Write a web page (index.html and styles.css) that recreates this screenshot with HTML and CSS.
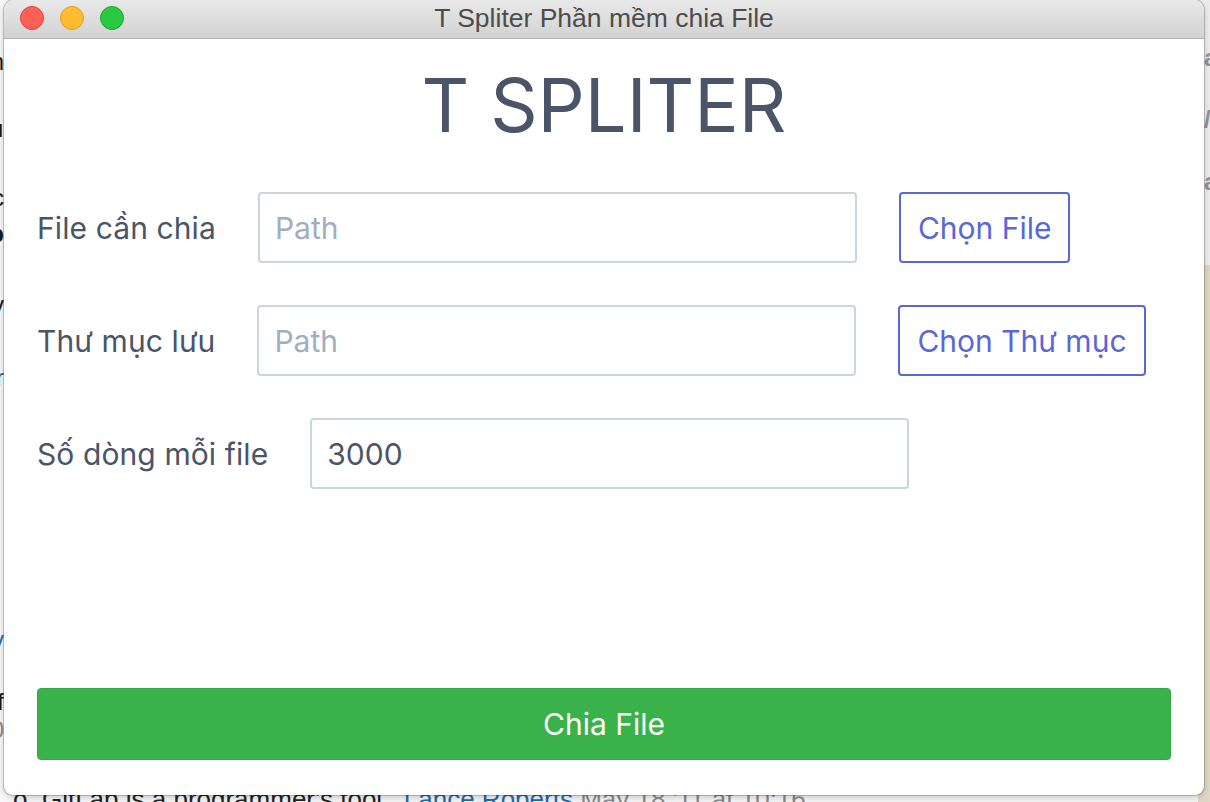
FILE: index.html
```html
<!DOCTYPE html>
<html lang="vi">
<head>
<meta charset="utf-8">
<title>T Spliter</title>
<link rel="stylesheet" href="styles.css">
</head>
<body>
<div class="desktop">
  <div class="backdrop">
    <div class="bg-left">
      <span class="frag f1">n</span>
      <span class="frag f2">ı</span>
      <span class="frag f3">c</span>
      <span class="frag f4">p</span>
      <span class="frag f5">v</span>
      <span class="frag f6">r</span>
      <span class="frag f7 link">y</span>
      <span class="frag f8">f</span>
      <span class="frag f9 grey">0</span>
    </div>
    <div class="bg-right">
      <div class="bg-right-top">
        <span class="rfrag">a</span>
        <span class="rfrag">/</span>
        <span class="rfrag">a</span>
      </div>
      <div class="bg-right-bottom"></div>
    </div>
    <div class="bg-bottom">o, GitLab is a programmer's tool. &nbsp;<span class="link">Lance Roberts</span> <span class="grey">May 18 '11 at 10:16</span></div>
  </div>

  <div class="window">
    <div class="titlebar">
      <div class="lights">
        <span class="light red"></span>
        <span class="light yellow"></span>
        <span class="light green"></span>
      </div>
      <div class="title">T Spliter Phần mềm chia File</div>
    </div>
    <div class="content">
      <h1 class="heading">T SPLITER</h1>
      <div class="form">
        <div class="row">
          <label class="label">File cần chia</label>
          <input class="input" type="text" placeholder="Path">
          <button class="btn-outline">Chọn File</button>
        </div>
        <div class="row">
          <label class="label">Thư mục lưu</label>
          <input class="input" type="text" placeholder="Path">
          <button class="btn-outline">Chọn Thư mục</button>
        </div>
        <div class="row">
          <label class="label">Số dòng mỗi file</label>
          <input class="input" type="text" value="3000">
        </div>
      </div>
      <button class="btn-primary">Chia File</button>
    </div>
  </div>
</div>
</body>
</html>
```

FILE: styles.css
```css
* { box-sizing: border-box; }
html, body { margin: 0; padding: 0; }
body {
  width: 1210px;
  height: 802px;
  overflow: hidden;
  font-family: Inter, "Noto Sans", sans-serif;
}
.desktop {
  position: relative;
  width: 1210px;
  height: 802px;
  background: #f4f4f4;
  overflow: hidden;
}
.backdrop {
  position: absolute;
  inset: 0;
  font-family: "Liberation Sans", Arial, sans-serif;
}
.bg-left {
  position: absolute;
  left: 0; top: 0;
  width: 12px; height: 802px;
  background: #f7f7f7;
}
.frag {
  position: absolute;
  right: 8px;
  font-size: 24px;
  color: #1a1a1a;
  line-height: 1;
}
.f1 { top: 50px; }
.f2 { top: 117px; }
.f3 { top: 186px; }
.f4 { top: 222px; font-weight: bold; }
.f5 { top: 293px; }
.f6 { top: 366px; color: #1d5d8f; }
.f7 { top: 628px; }
.f8 { top: 690px; }
.f9 { top: 718px; }
.link { color: #1f6bad; }
.grey { color: #8a8a8a; }
.bg-right {
  position: absolute;
  right: 0; top: 0;
  width: 12px; height: 802px;
  display: flex;
  flex-direction: column;
}
.bg-right-top {
  height: 265px;
  background: #ececec;
  display: flex;
  flex-direction: column;
  padding-top: 46px;
  gap: 38px;
}
.rfrag {
  font-size: 24px;
  font-weight: bold;
  color: #8c939a;
  line-height: 1;
  padding-left: 6px;
}
.bg-right-bottom {
  flex: 1;
  background: #ddd7c3;
}
.bg-bottom {
  position: absolute;
  left: 13px;
  top: 786px;
  font-size: 26px;
  line-height: 26px;
  color: #222;
  white-space: nowrap;
}

.window {
  position: absolute;
  left: 4px;
  top: 0;
  width: 1200px;
  height: 795px;
  background: #fff;
  border-radius: 10px 10px 9px 9px;
  overflow: hidden;
  box-shadow: 0 0 0 1px rgba(0,0,0,0.18), 0 2px 6px rgba(0,0,0,0.2);
  display: flex;
  flex-direction: column;
}
.titlebar {
  height: 39px;
  flex: none;
  background: linear-gradient(#e9e9e9, #d2d2d2);
  border-bottom: 1px solid #b3b3b3;
  display: flex;
  align-items: center;
  position: relative;
}
.lights {
  display: flex;
  gap: 16px;
  padding-left: 16px;
  padding-bottom: 3px;
}
.light {
  width: 24px;
  height: 24px;
  border-radius: 50%;
  display: block;
}
.red { background: #fe5f57; border: 1px solid #e0443e; }
.yellow { background: #febc2e; border: 1px solid #dea123; }
.green { background: #28c840; border: 1px solid #1aab29; }
.title {
  position: absolute;
  left: 0; right: 0; top: 3px;
  text-align: center;
  font-family: "Liberation Sans", Arial, sans-serif;
  font-size: 26.5px;
  line-height: 30px;
  color: #4c4c4c;
}
.content {
  flex: 1;
  display: flex;
  flex-direction: column;
  padding: 0 33px 35px 33px;
}
.heading {
  margin: 26px 0 0 0;
  text-align: center;
  font-size: 74px;
  font-weight: 400;
  line-height: 80px;
  color: #4a5568;
}
.form {
  margin-top: 47px;
  display: flex;
  flex-direction: column;
  gap: 42px;
  flex: 1;
}
.row {
  display: flex;
  align-items: center;
  gap: 42px;
  height: 71px;
}
.label {
  font-size: 30px;
  color: #4a5568;
  letter-spacing: 0.1px;
}
.input {
  width: 599px;
  height: 71px;
  border: 2px solid #cbd5e0;
  border-radius: 4px;
  padding: 0 15px;
  font-family: Inter, "Noto Sans", sans-serif;
  font-size: 30px;
  color: #4a5568;
  outline: none;
  background: #fff;
}
.input::placeholder { color: #a0aec0; }
.btn-outline {
  height: 71px;
  padding: 0 17px;
  border: 2px solid #5a67d8;
  border-radius: 4px;
  background: #fff;
  color: #5a67d8;
  font-family: Inter, "Noto Sans", sans-serif;
  font-size: 30px;
}
.btn-primary {
  height: 72px;
  border: 1px solid #33a844;
  border-radius: 4px;
  background: #3ab24a;
  color: #fff;
  font-family: Inter, "Noto Sans", sans-serif;
  font-size: 30px;
}
```
